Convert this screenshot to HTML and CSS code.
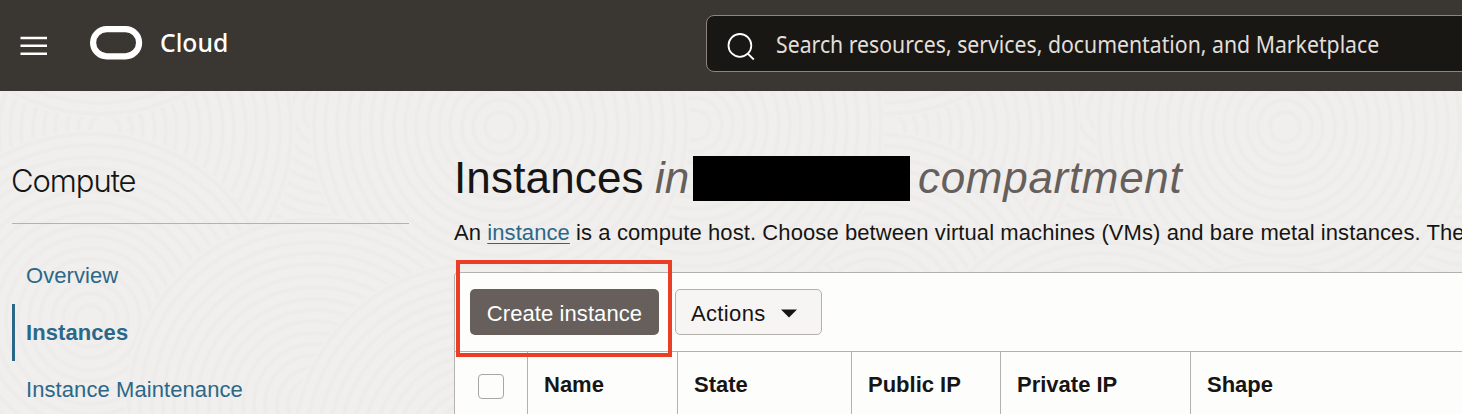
FILE: index.html
```html
<!DOCTYPE html>
<html lang="en">
<head>
<meta charset="utf-8">
<title>Instances</title>
<link rel="stylesheet" href="styles.css">
</head>
<body>
<header class="topbar">
  <svg class="menu" width="28" height="20" viewBox="0 0 28 20"><path d="M.5 2h26.500M.5 9.800h26.500M.5 17.800h26.500" stroke="#fff" stroke-width="2.500"/></svg>
  <svg class="logo" width="53" height="34" viewBox="0 0 53 34"><rect x="3.100" y="3.100" width="46" height="27.200" rx="13.600" fill="none" stroke="#fff" stroke-width="6.200"/></svg>
  <span class="brand">Cloud</span>
  <div class="search">
    <svg class="glass" width="28" height="28" viewBox="0 0 28 28"><g fill="none" stroke="#fff" stroke-width="1.800"><circle cx="12.900" cy="12.400" r="11.400"/><path d="M20.500 20.300l6.300 6.200"/></g></svg>
    <span class="placeholder">Search resources, services, documentation, and Marketplace</span>
  </div>
</header>
<div class="workspace">
  <svg class="texture" width="1462" height="323" viewBox="0 91 1462 323" aria-hidden="true">
    <defs>
      <g id="rings">
        <circle r="190" fill="#f0efed"/>
        <g fill="none" stroke="#edecea" stroke-width="4">
          <circle r="186"/><circle r="175"/><circle r="163"/><circle r="152"/><circle r="141"/><circle r="129"/><circle r="118"/><circle r="106"/><circle r="95"/><circle r="84"/><circle r="72"/><circle r="61"/><circle r="50"/><circle r="38"/><circle r="27"/><circle r="15"/>
        </g>
      </g>
      <g id="swirls">
        <use href="#rings" x="300" y="440"/>
        <use href="#rings" x="690" y="390"/>
        <use href="#rings" x="330" y="110"/>
        <use href="#rings" x="695" y="125"/>
        <use href="#rings" x="500" y="127"/>
        <use href="#rings" x="105" y="130"/>
        <use href="#rings" x="245" y="470"/>
        <use href="#rings" x="90" y="320"/>
        <use href="#rings" x="315" y="405"/>
        <use href="#rings" x="480" y="450"/>
        <use href="#rings" x="100" y="-72"/>
      </g>
    </defs>
    <use href="#swirls" x="-785"/>
    <use href="#swirls" x="785"/>
    <use href="#swirls"/>
  </svg>
  <div class="columns">
    <nav class="sidebar">
      <h2 class="section">Compute</h2>
      <a class="item">Overview</a>
      <a class="item current">Instances</a>
      <a class="item">Instance Maintenance</a>
    </nav>
    <main class="content">
      <h1 class="title"><span class="name">Instances</span><em class="in">in</em><span class="redacted"></span><em class="scope">compartment</em></h1>
      <p class="intro">An <a class="link">instance</a> is a compute host. Choose between virtual machines (VMs) and bare metal instances. The</p>
      <section class="panel">
        <div class="toolbar">
          <div class="primary"><button class="create">Create instance</button><span class="highlight"></span></div>
          <button class="actions">Actions<svg width="16" height="9" viewBox="0 0 16 9"><path d="M0 .5h16L8 8.500z" fill="#161513"/></svg></button>
        </div>
        <div class="thead">
          <div class="cell check"><span class="box"></span></div>
          <div class="cell">Name</div>
          <div class="cell">State</div>
          <div class="cell">Public IP</div>
          <div class="cell">Private IP</div>
          <div class="cell">Shape</div>
        </div>
      </section>
    </main>
  </div>
</div>
</body>
</html>
```
FILE: styles.css
```css
* { box-sizing: border-box; }
body { margin: 0; width: 1462px; height: 414px; overflow: hidden; background: #f0efed; color: #161513; font: 22px/30px "Liberation Sans", Arial, sans-serif; }
svg { display: block; flex: none; }
.topbar { display: flex; height: 91px; background: #3a3631; overflow: hidden; }
.menu { margin: 36px 0 0 20px; }
.logo { margin: 26px 0 0 42px; }
.brand { margin: 24px 0 0 17px; width: 546px; flex: none; color: #fff; font: 500 26px/36px "Noto Sans", sans-serif; transform: scaleX(.95); transform-origin: 0 0; }
.search { display: flex; flex: none; width: 800px; height: 57px; margin-top: 15px; background: #181714; border: 1px solid #8b8580; border-radius: 8px; }
.glass { margin: 17px 0 0 20px; }
.placeholder { margin: 11px 0 0 21px; color: #e2dfda; font: 24px/34px "Noto Sans", sans-serif; white-space: nowrap; transform: scaleX(.885); transform-origin: 0 0; }
.workspace { display: grid; height: 323px; overflow: hidden; }
.texture, .columns { grid-area: 1 / 1; }
.columns { display: flex; z-index: 1; height: 323px; }
.sidebar { width: 409px; padding-left: 12px; flex: none; }
.section { margin: 0 0 23px; padding-top: 69px; height: 133px; border-bottom: 1px solid #b5b2ae; font: 300 31px/42px Inter, sans-serif; letter-spacing: -1.05px; text-indent: -1px; }
.item { display: block; height: 57px; padding-left: 11px; border-left: 3px solid transparent; color: #2b6788; line-height: 57px; letter-spacing: .08px; }
.current { border-color: #2b6788; font-weight: 700; }
.content { flex: none; width: 1020px; margin-left: 45px; }
.title { display: flex; height: 45px; margin: 65px 0 0; font-weight: 400; font-size: 44px; line-height: 44px; white-space: nowrap; }
.name { width: 201px; letter-spacing: .15px; }
.in { width: 38px; color: #665f5b; }
.redacted { width: 217px; background: #000; }
.scope { margin-left: 8px; color: #665f5b; letter-spacing: .7px; }
.intro { margin: 17px 0 0; height: 54px; white-space: nowrap; letter-spacing: .085px; }
.link { color: #2b6788; text-decoration: underline; text-decoration-thickness: 1px; text-underline-offset: 3px; }
.panel { border: 1px solid #b5b2ae; border-radius: 4px 0 0 0; background: #fdfdfc; height: 160px; }
.toolbar { display: flex; height: 79px; padding: 16px 0 0 15px; border-bottom: 1px solid #b5b2ae; }
.primary { position: relative; width: 189px; height: 46px; }
button { font: 22px/30px "Liberation Sans", Arial, sans-serif; border-radius: 5px; padding: 4px 0 0; height: 46px; letter-spacing: .08px; }
.create { display: block; width: 189px; background: #665f5b; color: #fff; border: 0; }
.highlight { position: absolute; left: -14px; top: -29px; width: 216px; height: 97px; border: 4px solid #eb3f25; }
.actions { display: flex; align-items: center; width: 147px; margin-left: 16px; padding-left: 15px; gap: 15px; border: 1px solid #b5b2ae; background: #f6f5f4; color: #161513; letter-spacing: .35px; }
.actions svg { margin-bottom: 2px; }
.thead { display: grid; grid-template-columns: 73px 150px 174px 149px 190px 1fr; height: 80px; font-weight: 700; }
.cell { padding: 18px 0 0 16px; border-right: 1px solid #b5b2ae; }
.check { padding: 22px 0 0 23px; }
.box { display: block; width: 26px; height: 25px; border: 1px solid #aaa6a2; border-radius: 4px; }
```
